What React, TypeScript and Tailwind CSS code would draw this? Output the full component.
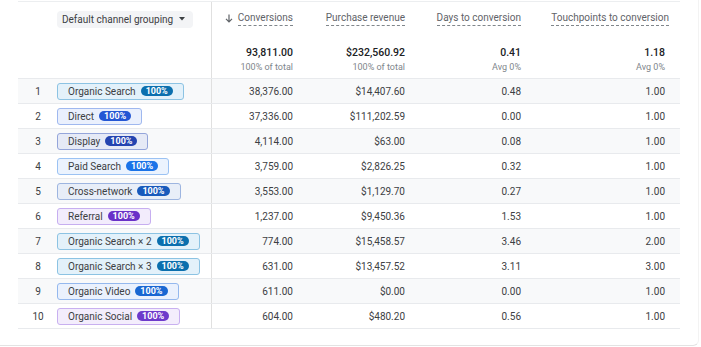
type Channel = {
    rank: number,
    name: string,
    chip: string,    // chip bg + border classes
    badge: string,   // badge bg class
    conversions: string,
    revenue: string,
    days: string,
    touchpoints: string,
}

const rows: Channel[] = [
    { rank: 1, name: "Organic Search", chip: "bg-[#e3f1fa] border-[#8cc3e3]", badge: "bg-[#0b6fae]", conversions: "38,376.00", revenue: "$14,407.60", days: "0.48", touchpoints: "1.00" },
    { rank: 2, name: "Direct", chip: "bg-[#eaf0fd] border-[#9fb8ef]", badge: "bg-[#2457d4]", conversions: "37,336.00", revenue: "$111,202.59", days: "0.00", touchpoints: "1.00" },
    { rank: 3, name: "Display", chip: "bg-[#e6eaf6] border-[#94a5da]", badge: "bg-[#2444b0]", conversions: "4,114.00", revenue: "$63.00", days: "0.08", touchpoints: "1.00" },
    { rank: 4, name: "Paid Search", chip: "bg-[#ebf3fe] border-[#9bc2f3]", badge: "bg-[#1a73e8]", conversions: "3,759.00", revenue: "$2,826.25", days: "0.32", touchpoints: "1.00" },
    { rank: 5, name: "Cross-network", chip: "bg-[#e8eef8] border-[#9db5e0]", badge: "bg-[#185abc]", conversions: "3,553.00", revenue: "$1,129.70", days: "0.27", touchpoints: "1.00" },
    { rank: 6, name: "Referral", chip: "bg-[#f2ecfc] border-[#c6aef0]", badge: "bg-[#6930c8]", conversions: "1,237.00", revenue: "$9,450.36", days: "1.53", touchpoints: "1.00" },
    { rank: 7, name: "Organic Search × 2", chip: "bg-[#e3f1fa] border-[#8cc3e3]", badge: "bg-[#0b6fae]", conversions: "774.00", revenue: "$15,458.57", days: "3.46", touchpoints: "2.00" },
    { rank: 8, name: "Organic Search × 3", chip: "bg-[#e3f1fa] border-[#8cc3e3]", badge: "bg-[#0b6fae]", conversions: "631.00", revenue: "$13,457.52", days: "3.11", touchpoints: "3.00" },
    { rank: 9, name: "Organic Video", chip: "bg-[#eaf1fd] border-[#94b8ee]", badge: "bg-[#1967d2]", conversions: "611.00", revenue: "$0.00", days: "0.00", touchpoints: "1.00" },
    { rank: 10, name: "Organic Social", chip: "bg-[#f3edfc] border-[#c8b0f0]", badge: "bg-[#6d3acb]", conversions: "604.00", revenue: "$480.20", days: "0.56", touchpoints: "1.00" },
]

const grid = "grid grid-cols-[39px_155px_93px_112px_116px_147px]"

function HeaderLabel({ label }: { label: string }) {
    return (
        <span className="border-b border-dashed border-[#80868b] pb-[1px] leading-[12px] text-[#5f6368]">
            {label}
        </span>
    )
}

function Total({ value, sub, last }: { value: string, sub: string, last?: boolean }) {
    return (
        <div className={`flex flex-col items-end pt-[10px] ${last ? "pr-[15px]" : "pr-3"}`}>
            <span className="text-[10.5px] leading-[13px] font-medium text-[#202124]">{value}</span>
            <span className="text-[9px] leading-[12px] mt-[2px] text-[#80868b]">{sub}</span>
        </div>
    )
}

export default function App() {
    return (
        <div className="w-[699px] h-[346px] border-b border-r border-b-[#e3e3e3] border-r-[#f3f3f3] rounded-br-[6px] bg-white pt-px text-[#3c4043] text-[10px]" style={{ fontFamily: "Roboto, 'Liberation Sans', sans-serif" }}>
            <div className="ml-[18px] w-[662px] border-t border-[#eceef0]">
                {/* OBJECT: Header */}
                <div className={`${grid} h-[34px] items-center`}>
                    <div />
                    <div className="h-full flex items-center border-r border-[#e0e0e0]">
                        <div className="flex items-center h-[17px] w-[136px] bg-[#f3f4f6] rounded-[4px] pl-[5px] pr-[8px] justify-between">
                            <span className="text-[10px] text-[#3c4043]">Default channel grouping</span>
                            <svg width="6" height="4" viewBox="0 0 6 4"><path d="M0 0h6L3 3.5z" fill="#3c4043" /></svg>
                        </div>
                    </div>
                    <div className="flex items-center justify-end pr-3 gap-[5px]">
                        <svg width="8" height="9" viewBox="0 0 8 9" className="mb-[2px]">
                            <path d="M4 0.5v7M1 4.8l3 3 3-3" stroke="#5f6368" strokeWidth="1.2" fill="none" />
                        </svg>
                        <HeaderLabel label="Conversions" />
                    </div>
                    <div className="flex justify-end pr-3"><HeaderLabel label="Purchase revenue" /></div>
                    <div className="flex justify-end pr-3"><HeaderLabel label="Days to conversion" /></div>
                    <div className="flex justify-end pr-[11px]"><HeaderLabel label="Touchpoints to conversion" /></div>
                </div>

                {/* OBJECT: Totals */}
                <div className={`${grid} h-[43px] border-b border-[#e8eaed]`}>
                    <div />
                    <div className="border-r border-[#e0e0e0]" />
                    <Total value="93,811.00" sub="100% of total" />
                    <Total value="$232,560.92" sub="100% of total" />
                    <Total value="0.41" sub="Avg 0%" />
                    <Total value="1.18" sub="Avg 0%" last />
                </div>

                {/* OBJECT: Rows */}
                {rows.map((r) => (
                    <div key={r.rank} className={`${grid} h-[25px] border-b border-[#e8eaed] ${r.rank % 2 === 1 ? "bg-[#f8f9fa]" : "bg-white"}`}>
                        <div className="flex items-center justify-center pl-[1px]">{r.rank}</div>
                        <div className="flex items-center border-r border-[#e0e0e0]">
                            <div className={`flex items-center h-[17px] rounded-[3px] border pl-[10px] pr-[10px] gap-[5px] ${r.chip}`}>
                                <span className="text-[10px] text-[#3c4043] whitespace-nowrap">{r.name}</span>
                                <span className={`h-[10px] px-[5px] rounded-full text-white text-[9px] font-bold leading-[10px] ${r.badge}`}>100%</span>
                            </div>
                        </div>
                        <div className="flex items-center justify-end pr-3">{r.conversions}</div>
                        <div className="flex items-center justify-end pr-3">{r.revenue}</div>
                        <div className="flex items-center justify-end pr-3">{r.days}</div>
                        <div className="flex items-center justify-end pr-[15px]">{r.touchpoints}</div>
                    </div>
                ))}
            </div>
        </div>
    )
}
